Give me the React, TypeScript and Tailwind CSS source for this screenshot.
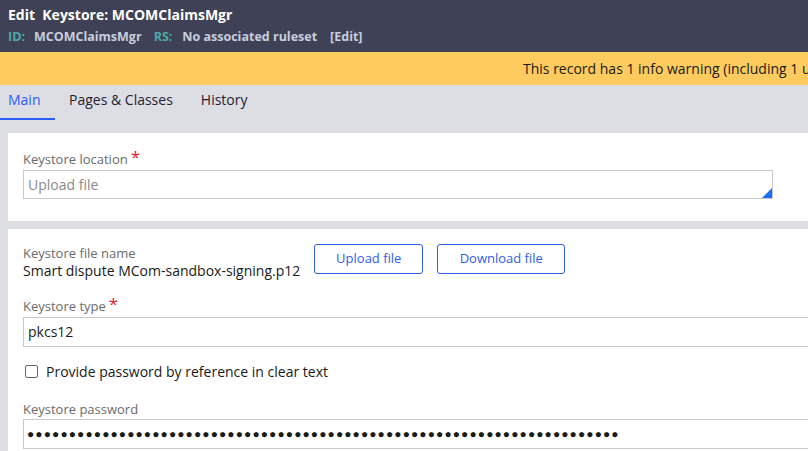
import React from 'react'

function Label({ text, required }: { text: string; required?: boolean }) {
  return (
    <div className="flex items-start text-[13px] leading-[18px] text-[#6b6b6b]">
      <span>{text}</span>
      {required && <span className="ml-[3px] text-[17px] leading-[14px] text-[#e0202e]">*</span>}
    </div>
  )
}

export default function App() {
  return (
    <div className="w-[808px] h-[451px] overflow-hidden bg-[#dddee3]" style={{ fontFamily: '"Open Sans", sans-serif' }}>
      <div className="w-[900px]">
        {/* Header */}
        <div className="h-[52px] bg-[#3f4256] pl-2 pt-[5px]">
          <div className="text-[14px] font-bold leading-[20px] text-white">
            Edit&nbsp; Keystore: MCOMClaimsMgr
          </div>
          <div className="mt-[2px] flex text-[12.5px] font-bold leading-[20px]">
            <span className="text-[#4ea8a6]">ID:</span>
            <span className="ml-[9px] text-[#c9cedf]">MCOMClaimsMgr</span>
            <span className="ml-[12px] text-[#4ea8a6]">RS:</span>
            <span className="ml-[10px] text-[#c9cedf]">No associated ruleset</span>
            <span className="ml-[13px] text-[#c9cedf]">[Edit]</span>
          </div>
        </div>

        {/* Warning banner */}
        <div className="h-[33px] bg-[#fecb5e] pl-[523px] flex items-center whitespace-nowrap text-[14px] text-[#1a1a1a]">
          This record has 1 info warning (including 1 unresolved warning)
        </div>

        {/* Tabs */}
        <div className="flex h-[35px] items-end text-[14px]">
          <div className="w-[55px] border-b-[2px] border-[#2c5bff] pb-[8px] pl-2 text-[#2c5bff]">Main</div>
          <div className="ml-[14px] pb-[10px] text-[#1f2235]">Pages &amp; Classes</div>
          <div className="ml-[28px] pb-[10px] text-[#1f2235]">History</div>
        </div>

        {/* Panels */}
        <div className="pl-2 pt-[13px]">
          <div className="h-[88px] bg-white px-[15px] pt-[17px]">
            <Label text="Keystore location" required />
            <div className="relative mt-[2px] h-[29px] w-[750px] border border-[#c8c8c8] px-[4px] text-[14px] leading-[27px] text-[#8a8a8a]">
              Upload file
              <svg className="absolute bottom-0 right-0" width="10" height="10" viewBox="0 0 10 10">
                <polygon points="10,0 10,10 0,10" fill="#1d6cf5" />
              </svg>
            </div>
          </div>

          <div className="mt-[8px] h-[240px] bg-white px-[15px] pt-[15px]">
            <div className="flex items-start">
              <div>
                <Label text="Keystore file name" />
                <div className="text-[14px] leading-[18px] text-[#1a1a1a]">Smart dispute MCom-sandbox-signing.p12</div>
              </div>
              <button className="ml-[14px] h-[30px] w-[109px] rounded-[3px] border border-[#2f5de8] text-[13px] text-[#2f5de8]">
                Upload file
              </button>
              <button className="ml-[14px] h-[30px] w-[128px] rounded-[3px] border border-[#2f5de8] text-[13px] text-[#2f5de8]">
                Download file
              </button>
            </div>

            <div className="mt-[17px]">
              <Label text="Keystore type" required />
              <div className="mt-[2px] h-[30px] border border-[#c8c8c8] px-[4px] text-[14px] leading-[28px] text-[#1a1a1a]">
                pkcs12
              </div>
            </div>

            <div className="mt-[14px] flex items-center text-[14px] text-[#1a1a1a]">
              <span className="ml-[2px] h-[13px] w-[13px] rounded-[2px] border border-[#666]"></span>
              <span className="ml-[8px]">Provide password by reference in clear text</span>
            </div>

            <div className="mt-[18px]">
              <Label text="Keystore password" />
              <div className="mt-[1px] h-[30px] border border-[#c8c8c8] px-[3px] text-[12px] leading-[28px] tracking-[1.1px] text-[#1a1a1a] whitespace-nowrap">
                {'●'.repeat(71)}
              </div>
            </div>
          </div>
        </div>
      </div>
    </div>
  )
}
